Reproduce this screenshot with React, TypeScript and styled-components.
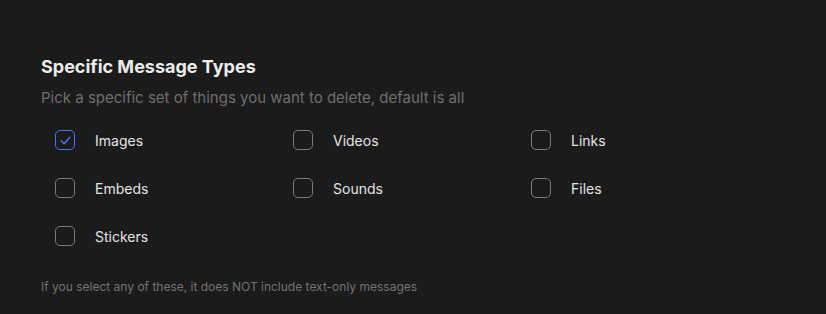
import React, { useState } from "react";
import styled, { createGlobalStyle } from "styled-components";

const GlobalStyle = createGlobalStyle`
  html, body {
    margin: 0;
    padding: 0;
    background: #1b1b1b;
  }
  body {
    font-family: Inter, "Noto Sans", sans-serif;
  }
`;

const Section = styled.section`
  width: 826px;
  height: 314px;
  box-sizing: border-box;
  padding: 55px 41px 0;
  background: #1b1b1b;
`;

const Title = styled.h2`
  margin: 0;
  font-size: 18px;
  line-height: 24px;
  font-weight: 700;
  color: #ececec;
`;

const Subtitle = styled.p`
  margin: 9px 0 0;
  font-size: 15px;
  line-height: 20px;
  color: #6f6f6f;
`;

const Grid = styled.div`
  display: grid;
  grid-template-columns: repeat(3, 238px);
  row-gap: 20px;
  margin-top: 18px;
  padding-left: 14px;
`;

const Option = styled.label`
  display: flex;
  align-items: center;
  gap: 20px;
  height: 28px;
  cursor: pointer;
  font-size: 14px;
  color: #e4e4e4;
`;

const Box = styled.span<{ $checked: boolean }>`
  width: 20px;
  height: 20px;
  box-sizing: border-box;
  border-radius: 5px;
  border: 1.5px solid ${(p) => (p.$checked ? "#4c73f0" : "#7b7b7b")};
  display: flex;
  align-items: center;
  justify-content: center;
`;

const Note = styled.p`
  margin: 29px 0 0;
  font-size: 12px;
  line-height: 16px;
  color: #737373;
`;

const types = ["Images", "Videos", "Links", "Embeds", "Sounds", "Files", "Stickers"];

export default function App() {
  const [selected, setSelected] = useState<string[]>(["Images"]);

  const toggle = (name: string) =>
    setSelected((s) => (s.includes(name) ? s.filter((n) => n !== name) : [...s, name]));

  return (
    <>
      <GlobalStyle />
      <Section>
        <Title>Specific Message Types</Title>
        <Subtitle>Pick a specific set of things you want to delete, default is all</Subtitle>
        <Grid>
          {types.map((name) => {
            const checked = selected.includes(name);
            return (
              <Option key={name} onClick={() => toggle(name)}>
                <Box $checked={checked}>
                  {checked && (
                    <svg width="13" height="13" viewBox="0 0 12 12" fill="none">
                      <path
                        d="M2 6.3 L4.8 9 L10 3"
                        stroke="#4c73f0"
                        strokeWidth="1.4"
                        strokeLinecap="round"
                        strokeLinejoin="round"
                      />
                    </svg>
                  )}
                </Box>
                {name}
              </Option>
            );
          })}
        </Grid>
        <Note>If you select any of these, it does NOT include text-only messages</Note>
      </Section>
    </>
  );
}
